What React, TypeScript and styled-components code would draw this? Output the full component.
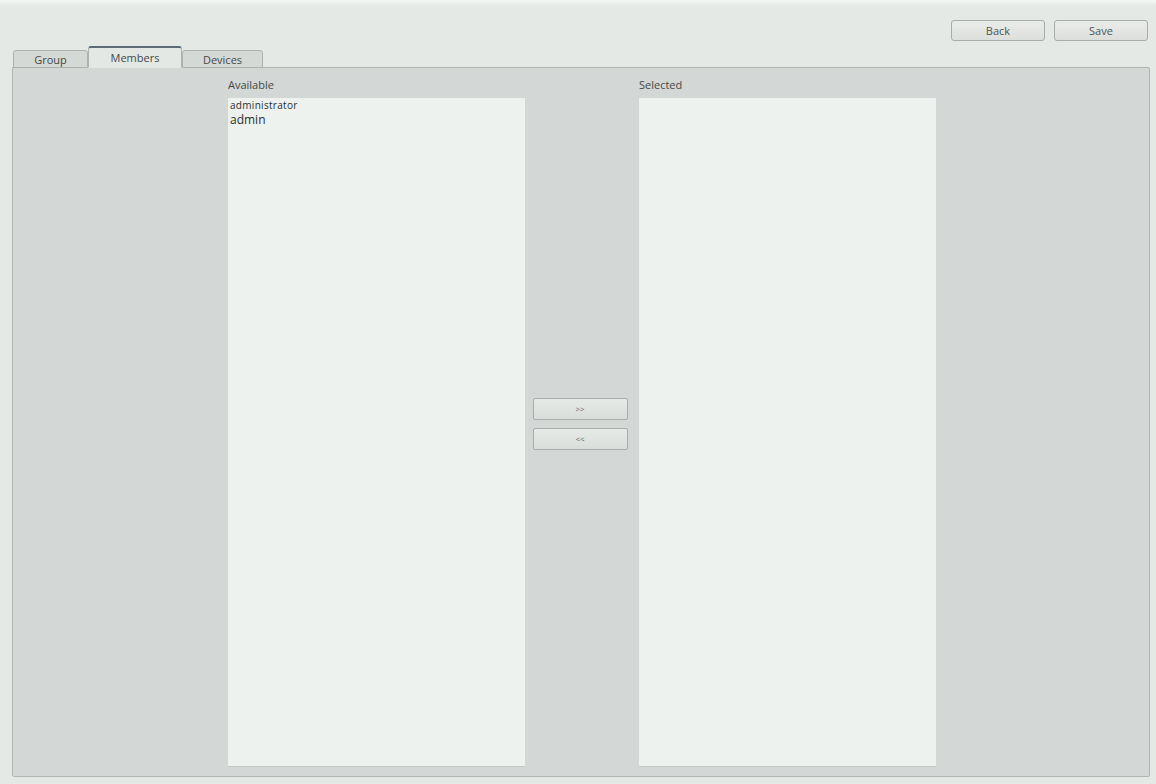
import { createGlobalStyle, styled } from 'styled-components';

const GlobalStyle = createGlobalStyle`
    html, body {
        margin: 0;
        padding: 0;
        background: #e4e9e6;
    }
    body {
        font-family: 'Open Sans', 'DejaVu Sans', sans-serif;
        color: #3a3d3b;
    }
`;

const tabs = ['Group', 'Members', 'Devices'];
const available = ['administrator', 'admin'];

const App = () => {
    return (
        <>
            <GlobalStyle />
            <Window>
                <TopBar>
                    <$Button>Back</$Button>
                    <$Button>Save</$Button>
                </TopBar>
                <TabBar>
                    {tabs.map((t) => (
                        <Tab key={t} $active={t === 'Members'}>
                            {t}
                        </Tab>
                    ))}
                </TabBar>
                <Pane>
                    <Column>
                        <Label>Available</Label>
                        <List>
                            {available.map((name, i) => (
                                <Item key={name} $first={i === 0}>
                                    {name}
                                </Item>
                            ))}
                        </List>
                    </Column>
                    <Middle>
                        <MoveButton>&gt;&gt;</MoveButton>
                        <MoveButton>&lt;&lt;</MoveButton>
                    </Middle>
                    <Column>
                        <Label>Selected</Label>
                        <List />
                    </Column>
                </Pane>
            </Window>
        </>
    );
};

export default App;

const Window = styled.div`
    height: 784px;
    box-sizing: border-box;
    padding: 0 6px 7px 12px;
    display: flex;
    flex-direction: column;
    background: linear-gradient(#f4f6f5 0, #e4e9e6 6px);
`;

const TopBar = styled.div`
    height: 47px;
    box-sizing: border-box;
    padding-top: 20px;
    padding-right: 2px;
    display: flex;
    justify-content: flex-end;
    gap: 9px;
`;

const $Button = styled.button`
    width: 94px;
    height: 21px;
    box-sizing: border-box;
    border: 1px solid #a9adaa;
    border-radius: 3px;
    background: linear-gradient(#e9ece9, #dcdfdc);
    font-family: inherit;
    font-size: 11px;
    color: #505553;
    padding: 0;
`;

const TabBar = styled.div`
    display: flex;
    align-items: flex-end;
    height: 21px;
    padding-left: 1px;
    margin-bottom: -1px;
    position: relative;
    z-index: 1;
`;

const Tab = styled.div<{ $active?: boolean }>`
    box-sizing: border-box;
    height: ${({ $active }) => ($active ? '22px' : '18px')};
    padding: 0 12px;
    display: flex;
    align-items: center;
    justify-content: center;
    font-size: 11px;
    color: #454947;
    border: 1px solid #aeb2af;
    border-bottom: ${({ $active }) => ($active ? '1px solid #e4e8e5' : '1px solid #aeb2af')};
    border-top: ${({ $active }) => ($active ? '2px solid #5d6b75' : '1px solid #aeb2af')};
    border-radius: 3px 3px 0 0;
    background: ${({ $active }) => ($active ? '#e4e8e5' : '#d5d9d6')};
    min-width: ${({ $active }) => ($active ? '94px' : '75px')};

    & + & {
        margin-left: ${({ $active }) => ($active ? '0' : '1px')};
    }

    &:last-child {
        min-width: 81px;
    }
`;

const Pane = styled.div`
    flex: 1;
    display: flex;
    box-sizing: border-box;
    border: 1px solid #b2b6b3;
    border-radius: 0 2px 2px 2px;
    background: #d3d7d5;
    padding: 10px 0 9px 215px;
`;

const Column = styled.div`
    width: 297px;
    display: flex;
    flex-direction: column;
`;

const Label = styled.div`
    height: 20px;
    font-size: 11px;
    color: #454947;
    line-height: 14px;
`;

const List = styled.div`
    flex: 1;
    background: #eef2ee;
    border-bottom: 1px solid #c4c8c5;
    padding: 1px 0 0 2px;
`;

const Item = styled.div<{ $first?: boolean }>`
    font-size: ${({ $first }) => ($first ? '10px' : '12px')};
    line-height: ${({ $first }) => ($first ? '13px' : '15px')};
    color: #2b2e2c;
    letter-spacing: ${({ $first }) => ($first ? '0.3px' : '0')};
`;

const Middle = styled.div`
    width: 114px;
    box-sizing: border-box;
    display: flex;
    flex-direction: column;
    align-items: center;
    justify-content: center;
    gap: 8px;
    padding-top: 2px;
    padding-right: 4px;
`;

const MoveButton = styled.button`
    width: 95px;
    height: 22px;
    box-sizing: border-box;
    border: 1px solid #a9adaa;
    border-radius: 2px;
    background: linear-gradient(#e6e9e6, #dadedb);
    font-family: inherit;
    font-size: 8px;
    color: #5f6361;
    padding: 0;
`;
